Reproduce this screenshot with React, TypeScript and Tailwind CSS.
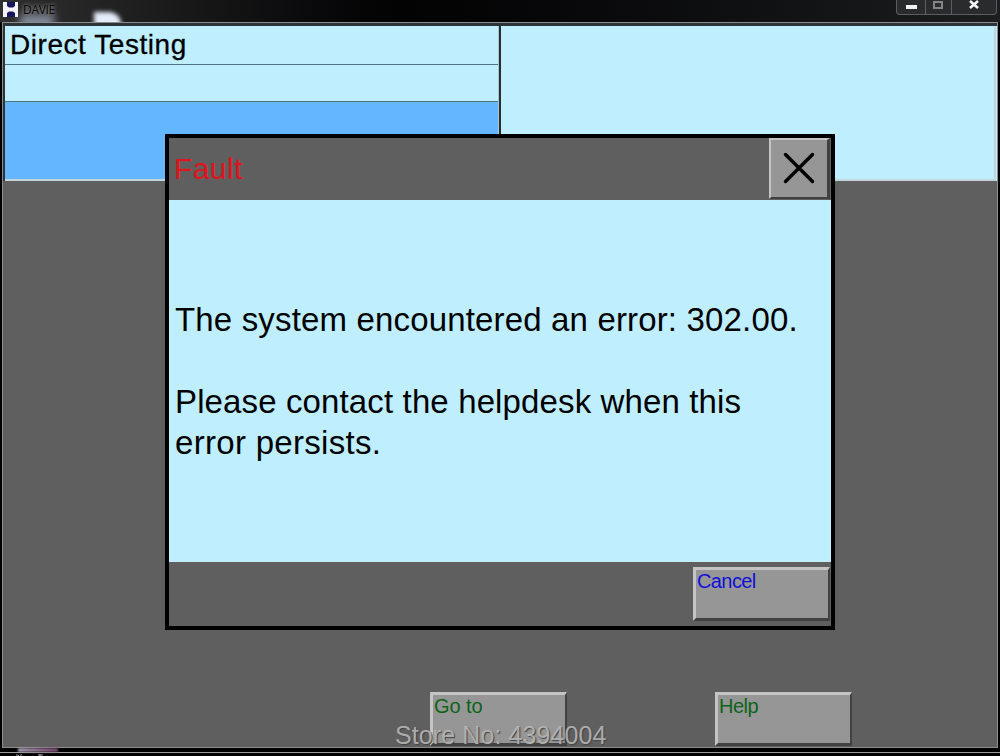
import React from 'react';
import clsx from 'clsx';

type PanelButtonProps = {
  label: string;
  className?: string;
};

function PanelButton({ label, className }: PanelButtonProps) {
  return (
    <button
      className={clsx(
        'flex h-[54px] w-[137px] items-start border-t-3 border-r-2 border-b-3 border-l-3 border-t-[#c4c4c4] border-l-[#c4c4c4] border-r-[#414141] border-b-[#414141] bg-[#969696] pl-px text-[20px] leading-[23px]',
        className
      )}
    >
      {label}
    </button>
  );
}

function TitleBar() {
  return (
    <header className="relative flex h-[22px] shrink-0 items-start justify-between overflow-hidden bg-gradient-to-r from-[#303030] via-[#030304] via-40% to-[#1c1d1e]">
      {/* Desktop glow behind the glass */}
      <div className="absolute top-[14px] left-[20px] h-[14px] w-[34px] bg-[#aab4cc] opacity-70 blur-[4px]" />
      <div className="absolute top-[12px] left-[94px] h-[16px] w-[27px] rounded-tr-xl bg-[#e4ecfa] blur-[2px]" />

      <div className="relative flex items-start pt-[2px] pl-[3px]">
        <svg width="15" height="15" viewBox="0 0 15 15">
          <rect width="15" height="15" fill="#f4f4f8" />
          <path d="M4 0h8v4l-2 1.5H6L4 4z" fill="#17175e" />
          <path d="M4 15h8v-4l-2-1.5H6L4 11z" fill="#17175e" />
        </svg>
        <span className="ml-[5px] font-['Open_Sans',sans-serif] text-[12px] leading-[15px] tracking-[-0.3px] text-[#050505] [text-shadow:0_0_3px_#8a8a8a,0_0_4px_#777]">
          DAVIE
        </span>
      </div>

      <div className="relative mr-[3px] flex h-[15px] w-[101px] rounded-b border-x border-b border-[#5c5f61] bg-[#2a2b2c]">
        <div className="w-[29px] border-r border-[#5c5f61]">
          <svg width="28" height="14" viewBox="0 0 28 14">
            <rect x="9" y="5" width="11" height="4" fill="#f2f2f2" />
          </svg>
        </div>
        <div className="w-[26px] border-r border-[#5c5f61]">
          <svg width="25" height="14" viewBox="0 0 25 14">
            <rect x="8" y="2" width="8" height="6" fill="none" stroke="#858585" strokeWidth="2" />
          </svg>
        </div>
        <svg width="44" height="14" viewBox="0 0 44 14">
          <path d="M18 1l8 7M26 1l-8 7" stroke="#f5f5f5" strokeWidth="2.6" />
        </svg>
      </div>
    </header>
  );
}

function FaultDialog() {
  return (
    <div
      role="alertdialog"
      aria-label="Fault"
      className="absolute top-[134px] left-[165px] flex h-[496px] w-[670px] flex-col border-4 border-black bg-[#5f5f5f]"
    >
      <div className="flex h-[62px] shrink-0 items-start justify-between pr-px">
        <h2 className="pl-[5px] text-[30px] leading-[62px] tracking-[0.4px] text-[#e0141c]">Fault</h2>
        <button
          aria-label="Close"
          className="flex h-[61px] w-[61px] items-center justify-center border-t-2 border-r-3 border-b-2 border-l-2 border-t-[#c4c4c4] border-l-[#c4c4c4] border-r-[#414141] border-b-[#414141] bg-[#969696] pb-px"
        >
          <svg width="32" height="32" viewBox="0 0 32 32">
            <path d="M2.5 2.5l27 27M29.5 2.5l-27 27" stroke="#000" strokeWidth="3.4" strokeLinecap="round" />
          </svg>
        </button>
      </div>

      <div className="flex flex-1 flex-col bg-[#bfeeff] pt-[99px] pl-[6px] text-[33px] leading-[41px] whitespace-nowrap text-black">
        <p className="tracking-[0.16px]">The system encountered an error: 302.00.</p>
        <p className="mt-[41px] tracking-[0.13px]">
          Please contact the helpdesk when this
          <br />
          <span className="tracking-[0.3px]">error persists.</span>
        </p>
      </div>

      <div className="flex h-[64px] shrink-0 justify-end pt-[5px] pr-px">
        <PanelButton label="Cancel" className="tracking-[-0.6px] text-[#1010d8]" />
      </div>
    </div>
  );
}

export default function App() {
  return (
    <div className="relative flex h-[756px] w-[1000px] flex-col overflow-hidden bg-black font-['Liberation_Sans',Arial,sans-serif]">
      <TitleBar />

      <main className="mr-[2px] ml-[2px] flex h-[726px] shrink-0 flex-col border border-[#8c8c8c] bg-[#5f5f5f]">
        {/* Vehicle and test info */}
        <section className="flex h-[158px] shrink-0 border-t-3 border-l-2 border-[#2b3438] bg-[#bfeeff] pr-px">
          <div className="flex w-[493px] flex-col border-b-2 border-b-[#c3d5dc]">
            <h1 className="h-[39px] border-b border-[#4d7482] pl-[5px] text-[28px] leading-[38px] tracking-[0.55px] text-black [-webkit-text-stroke:0.3px_#000]">
              Direct Testing
            </h1>
            <div className="h-[37px] border-b border-[#4d7482]" />
            <div className="flex-1 bg-[#64b6ff]" />
          </div>
          <div className="w-[3px] border-r-2 border-l border-r-[#223036] border-l-[#b4c2c6]" />
          <div className="flex-1 border-r-2 border-b-2 border-[#c3d5dc]" />
        </section>

        <footer className="mt-auto flex h-[55px] pl-[427px] text-[#0c6418]">
          <PanelButton label="Go to" className="tracking-[-0.1px]" />
          <PanelButton label="Help" className="ml-[148px] tracking-[-0.5px]" />
        </footer>
      </main>

      {/* Bottom glass edge */}
      <div className="flex h-[4px] shrink-0 bg-black pl-[18px]">
        <div className="h-[4px] w-[40px] bg-gradient-to-r from-[#a9a5b8] to-[#76456f] blur-[1px]" />
      </div>
      <div className="h-px shrink-0 bg-[#9a9a9a]" />
      <div className="h-[3px] shrink-0 bg-black pl-[16px]">
        <svg width="30" height="3" viewBox="0 0 30 3">
          <path d="M1 1v2M2 2l1 1M5 1v2M22 2h5M24 1v2" stroke="#a8a8a8" />
        </svg>
      </div>

      <FaultDialog />

      <div className="absolute top-[721px] left-[395px] text-[25px] leading-[29px] tracking-[0.1px] whitespace-nowrap text-[#bdbdbd]/85 [text-shadow:1px_1px_1px_#444]">
        Store No: 4394004
      </div>
    </div>
  );
}
